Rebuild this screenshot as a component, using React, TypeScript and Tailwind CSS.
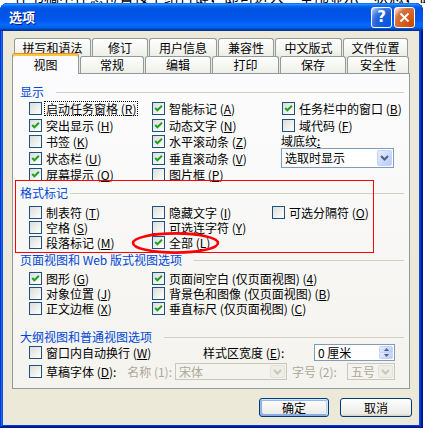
import type { ReactNode } from 'react'

type Item = { t: string; k: string; on?: boolean; focus?: boolean; tail?: string }

const displayCol1: Item[] = [
  { t: '启动任务窗格', k: 'R', focus: true },
  { t: '突出显示', k: 'H', on: true },
  { t: '书签', k: 'K' },
  { t: '状态栏', k: 'U', on: true },
  { t: '屏幕提示', k: 'O', on: true },
]

const displayCol2: Item[] = [
  { t: '智能标记', k: 'A', on: true },
  { t: '动态文字', k: 'N', on: true },
  { t: '水平滚动条', k: 'Z', on: true },
  { t: '垂直滚动条', k: 'V', on: true },
  { t: '图片框', k: 'P' },
]

const formatCol1: Item[] = [
  { t: '制表符', k: 'T' },
  { t: '空格', k: 'S' },
  { t: '段落标记', k: 'M' },
]

const formatCol2: Item[] = [
  { t: '隐藏文字', k: 'I' },
  { t: '可选连字符', k: 'Y' },
  { t: '全部', k: 'L', on: true },
]

const pageCol1: Item[] = [
  { t: '图形', k: 'G', on: true },
  { t: '对象位置', k: 'J' },
  { t: '正文边框', k: 'X' },
]

const pageCol2: Item[] = [
  { t: '页面间空白 (仅页面视图)', k: '4', on: true },
  { t: '背景色和图像 (仅页面视图)', k: 'B' },
  { t: '垂直标尺 (仅页面视图)', k: 'C', on: true },
]

// alternating heights so rows land on whole pixels
const displayHeights = ['h-[17px]', 'h-[16px]', 'h-[17px]', 'h-[16px]', 'h-[17px]']

const backTabs = [
  { label: '拼写和语法', w: 'w-[77px]' },
  { label: '修订', w: 'w-[56px]' },
  { label: '用户信息', w: 'w-[68px]' },
  { label: '兼容性', w: 'w-[56px]' },
  { label: '中文版式', w: 'w-[67px]' },
  { label: '文件位置', w: 'w-[65px]' },
]

const frontTabs = [
  { label: '常规', w: 'w-[64px]' },
  { label: '编辑', w: 'w-[66px]' },
  { label: '打印', w: 'w-[67px]' },
  { label: '保存', w: 'w-[66px]' },
  { label: '安全性', w: 'w-[62px]' },
]

function Check({ on }: { on?: boolean }) {
  return (
    <span className="flex h-[13px] w-[13px] shrink-0 items-center justify-center border border-[#1c5180] bg-[linear-gradient(135deg,#dcdcd7,#ffffff)]">
      {on && (
        <svg width="9" height="9" viewBox="0 0 9 9">
          <path d="M1.2 4 L3.4 6.3 L7.9 1.8" fill="none" stroke="#21a121" strokeWidth="2" />
        </svg>
      )}
    </span>
  )
}

function Opt({ item, h }: { item: Item; h: string }) {
  return (
    <div className={`flex items-center gap-[3px] ${h}`}>
      <Check on={item.on} />
      <span
        className={`whitespace-nowrap px-[1px] leading-[13px] ${
          item.focus ? 'outline-1 outline-dotted outline-black' : ''
        }`}
      >
        {item.t} (<u className="underline-offset-[1px]">{item.k}</u>){item.tail}
      </span>
    </div>
  )
}

function Header({ title, line }: { title: string; line: string }) {
  return (
    <div className="flex h-[14px] items-center pl-[7px] pr-[5px] text-[#0046d5]">
      <span className="whitespace-nowrap">{title}</span>
      <span className={`h-px flex-1 bg-[#d0d0bf] ${line}`} />
    </div>
  )
}

function Chevron({ color }: { color: string }) {
  return (
    <svg width="9" height="6" viewBox="0 0 9 6">
      <path d="M1 1 L4.5 4.5 L8 1" fill="none" stroke={color} strokeWidth="2" />
    </svg>
  )
}

function Combo({ text, w, disabled }: { text: string; w: string; disabled?: boolean }) {
  return (
    <div
      className={`flex h-[17px] shrink-0 items-center border ${w} ${
        disabled ? 'border-[#c9c7ba] bg-[#f4f3ee] text-[#aca899]' : 'h-[20px] border-[#7f9db9] bg-white'
      }`}
    >
      <span className="flex-1 whitespace-nowrap pl-[3px]">{text}</span>
      <span
        className={`m-[1px] flex h-[calc(100%-2px)] w-[15px] items-center justify-center rounded-[2px] border ${
          disabled
            ? 'border-[#e4e2d8] bg-[#eeede6]'
            : 'border-[#c3d3fd] bg-[linear-gradient(135deg,#e6eefc,#b7cbf8)]'
        }`}
      >
        <Chevron color={disabled ? '#c9c7ba' : '#4d6185'} />
      </span>
    </div>
  )
}

function Tab({ children, w, selected }: { children: ReactNode; w: string; selected?: boolean }) {
  if (selected) {
    return (
      <div
        className={`relative z-10 mb-[-1px] flex h-[21px] items-center justify-center rounded-t-[3px] border-x border-t border-[#919b9c] border-t-[#e68b2c] bg-[#fcfcfe] pt-[2px] shadow-[inset_0_2px_#ffc73c] ${w}`}
      >
        {children}
      </div>
    )
  }
  return (
    <div
      className={`flex h-full items-center justify-center rounded-t-[3px] border-x border-t border-[#919b9c] bg-[linear-gradient(180deg,#ffffff,#fafaf9_26%,#f0f0ea_95%,#ecebe6)] ${w}`}
    >
      {children}
    </div>
  )
}

function Button({ children, w, primary }: { children: ReactNode; w: string; primary?: boolean }) {
  return (
    <div
      className={`flex h-[19px] items-center justify-center rounded-[3px] border border-[#003c74] bg-[linear-gradient(180deg,#ffffff,#ecebe6_86%,#d6d0c5)] ${w} ${
        primary
          ? 'shadow-[inset_-1px_1px_#cee7ff,inset_1px_2px_#98b8ea,inset_-2px_2px_#bcd4f6,inset_1px_-1px_#89ade4,inset_2px_-2px_#89ade4]'
          : ''
      }`}
    >
      {children}
    </div>
  )
}

export default function App() {
  return (
    <div className="relative h-[430px] w-[425px] overflow-hidden bg-white font-['Noto_Sans_CJK_SC',sans-serif] text-[12px] leading-[14px] text-black">
      {/* bits of the document behind the dialog */}
      <div className="h-[3px] overflow-hidden whitespace-nowrap pl-[14px] text-[15px] leading-[15px]">
        <div className="-mt-[11px]">在书稿中任意位置按下组合键，即可进入“全部显示”状态，此时按键盘上的空格键即可</div>
      </div>

      {/* window */}
      <div className="flex h-[425px] w-[423px] flex-col overflow-hidden rounded-t-[8px] bg-[#0a48dd] shadow-[inset_-1px_-1px_#00138c,inset_1px_1px_#0831d9,inset_-2px_-2px_#001ea0,inset_2px_2px_#166aee,inset_-3px_-3px_#003bda,inset_3px_3px_#0855dd]">
        {/* title bar */}
        <div className="flex h-[28px] shrink-0 items-center rounded-t-[8px] bg-[linear-gradient(180deg,#0058ee_0%,#3593ff_4%,#288eff_6%,#127dff_8%,#036ffc_10%,#0262ee_14%,#0057e5_20%,#0054e3_24%,#0055eb_56%,#005bf5_66%,#026afe_76%,#0062ef_86%,#0052d6_92%,#0040ab_94%,#003092_100%)] pl-[9px] pr-[8px]">
          <span className="flex-1 text-[13px] font-bold text-white [text-shadow:1px_1px_#0a1883]">选项</span>
          <div className="flex gap-[2px]">
            <div className="flex h-[21px] w-[21px] items-center justify-center rounded-[3px] border border-white bg-[radial-gradient(circle_at_90%_90%,#0054e9_0%,#2263d5_55%,#4479e4_70%,#a3bbec_90%,#ffffff_100%)] font-['DejaVu_Sans',sans-serif] text-[15px] font-bold text-white">
              ?
            </div>
            <div className="flex h-[21px] w-[21px] items-center justify-center rounded-[3px] border border-white bg-[radial-gradient(circle_at_90%_90%,#cc4600_0%,#dc6527_55%,#cd7546_70%,#ffccb2_90%,#ffffff_100%)]">
              <svg width="11" height="11" viewBox="0 0 11 11">
                <path d="M1.5 1.5 L9.5 9.5 M9.5 1.5 L1.5 9.5" stroke="white" strokeWidth="2" />
              </svg>
            </div>
          </div>
        </div>

        {/* dialog body */}
        <div className="mb-[3px] ml-[3px] mr-[4px] flex flex-1 flex-col bg-[#ece9d8] pt-[7px]">
          {/* back tab row */}
          <div className="ml-[11px] flex h-[18px] gap-[1px]">
            {backTabs.map((t) => (
              <Tab key={t.label} w={t.w}>
                {t.label}
              </Tab>
            ))}
          </div>
          {/* front tab row */}
          <div className="ml-[9px] flex h-[17px] items-end gap-[1px]">
            <Tab w="w-[67px]" selected>
              视图
            </Tab>
            {frontTabs.map((t) => (
              <Tab key={t.label} w={t.w}>
                {t.label}
              </Tab>
            ))}
          </div>

          {/* tab panel */}
          <div className="ml-[9px] flex h-[316px] w-[398px] flex-col border border-[#919b9c] bg-[linear-gradient(180deg,#fcfcfe,#f4f3ee)] pt-[11px]">
            <Header title="显示" line="ml-[12px]" />
            <div className="mt-[1px] flex pl-[16px]">
              <div className="w-[123px]">
                {displayCol1.map((it, i) => (
                  <Opt key={it.t} item={it} h={displayHeights[i]} />
                ))}
              </div>
              <div className="w-[130px]">
                {displayCol2.map((it, i) => (
                  <Opt key={it.t} item={it} h={displayHeights[i]} />
                ))}
              </div>
              <div className="flex flex-col">
                <Opt item={{ t: '任务栏中的窗口', k: 'B', on: true }} h="h-[17px]" />
                <Opt item={{ t: '域代码', k: 'F' }} h="h-[16px]" />
                <div className="-ml-[1px] flex h-[15px] items-center">
                  域底纹<u className="underline-offset-[1px]">:</u>
                </div>
                <div className="-ml-[1px]">
                  <Combo text="选取时显示" w="w-[113px]" />
                </div>
              </div>
            </div>

            <div className="mt-[3px]">
              <Header title="格式标记" line="ml-[2px]" />
            </div>
            <div className="mt-[5px] flex pl-[16px]">
              <div className="w-[123px]">
                {formatCol1.map((it) => (
                  <Opt key={it.t} item={it} h="h-[15px]" />
                ))}
              </div>
              <div className="w-[120px]">
                {formatCol2.map((it) => (
                  <Opt key={it.t} item={it} h="h-[15px]" />
                ))}
              </div>
              <div>
                <Opt item={{ t: '可选分隔符', k: 'O' }} h="h-[15px]" />
              </div>
            </div>

            <div className="mt-[3px]">
              <Header title="页面视图和 Web 版式视图选项" line="ml-[12px]" />
            </div>
            <div className="mt-[4px] flex pl-[16px]">
              <div className="w-[123px]">
                {pageCol1.map((it) => (
                  <Opt key={it.t} item={it} h="h-[15px]" />
                ))}
              </div>
              <div>
                {pageCol2.map((it) => (
                  <Opt key={it.t} item={it} h="h-[15px]" />
                ))}
              </div>
            </div>

            <div className="mt-[14px]">
              <Header title="大纲视图和普通视图选项" line="ml-[12px]" />
            </div>
            <div className="flex h-[17px] items-center pl-[16px]">
              <div className="w-[174px]">
                <Opt item={{ t: '窗口内自动换行', k: 'W' }} h="h-[17px]" />
              </div>
              <span className="w-[111px] whitespace-nowrap">
                样式区宽度 (<u className="underline-offset-[1px]">E</u>):
              </span>
              <div className="flex h-[17px] w-[81px] items-center border border-[#7f9db9] bg-white">
                <span className="flex-1 pl-[3px]">0 厘米</span>
                <div className="m-[1px] flex h-[13px] w-[14px] flex-col">
                  <span className="flex flex-1 items-center justify-center rounded-t-[2px] border border-[#c3d3fd] bg-[linear-gradient(135deg,#e6eefc,#b7cbf8)]">
                    <svg width="5" height="3" viewBox="0 0 5 3">
                      <path d="M0 3 L2.5 0 L5 3 Z" fill="#4d6185" />
                    </svg>
                  </span>
                  <span className="flex flex-1 items-center justify-center rounded-b-[2px] border border-t-0 border-[#c3d3fd] bg-[linear-gradient(135deg,#e6eefc,#b7cbf8)]">
                    <svg width="5" height="3" viewBox="0 0 5 3">
                      <path d="M0 0 L2.5 3 L5 0 Z" fill="#4d6185" />
                    </svg>
                  </span>
                </div>
              </div>
            </div>
            <div className="mt-[2px] flex h-[17px] items-center pl-[16px]">
              <div className="flex w-[146px] shrink-0 items-center justify-between pr-[3px]">
                <Opt item={{ t: '草稿字体', k: 'D', tail: ':' }} h="h-[17px]" />
                <span className="whitespace-nowrap text-[#aca899]">名称 (1):</span>
              </div>
              <Combo text="宋体" w="w-[112px]" disabled />
              <span className="ml-[5px] w-[55px] shrink-0 whitespace-nowrap text-[#aca899]">字号 (2):</span>
              <Combo text="五号" w="w-[48px]" disabled />
            </div>
          </div>

          {/* buttons */}
          <div className="mr-[7px] mt-[9px] flex justify-end gap-[11px]">
            <Button w="w-[70px]" primary>
              确定
            </Button>
            <Button w="w-[72px]">取消</Button>
          </div>
        </div>
      </div>

      {/* red annotation marks drawn over the screenshot */}
      <div className="pointer-events-none absolute left-[15px] top-[180px] h-[73px] w-[359px] border border-[#ff0000]" />
      <svg className="pointer-events-none absolute left-[131px] top-[231px]" width="89" height="24" viewBox="0 0 89 24">
        <ellipse cx="44.5" cy="12" rx="42.5" ry="9.6" fill="none" stroke="#ff0000" strokeWidth="2.6" />
      </svg>
    </div>
  )
}
